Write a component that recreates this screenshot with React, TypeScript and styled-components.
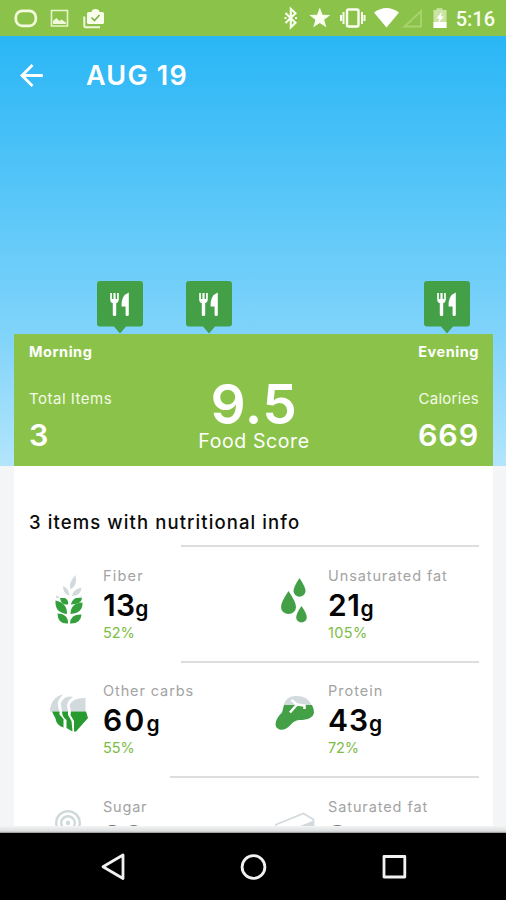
import React from 'react';
import styled, { createGlobalStyle } from 'styled-components';

const GlobalStyle = createGlobalStyle`
  *, *::before, *::after { box-sizing: border-box; }
  html, body { margin: 0; padding: 0; background: #f4f6f8; overflow: hidden; }
  svg { display: block; flex: none; overflow: visible; }
`;

const Screen = styled.div`
  width: 506px;
  height: 900px;
  overflow: hidden;
  display: flex;
  flex-direction: column;
  background: #f3f5f7;
  font-family: Inter, 'Liberation Sans', sans-serif;
  white-space: nowrap;
`;

const StatusBar = styled.div`
  height: 36px;
  flex: none;
  background: #8bc34a;
  display: flex;
  justify-content: space-between;
`;

const StatusGroup = styled.div`
  display: flex;
  gap: 4px;
`;

const Clock = styled.span`
  font-family: Roboto, sans-serif;
  font-size: 20px;
  font-weight: 500;
  line-height: 38px;
  color: #fbfff2;
  padding: 0 11px 0 0;
`;

const Sky = styled.div`
  height: 430px;
  flex: none;
  display: flex;
  flex-direction: column;
  background: linear-gradient(#29b6f6, #81d4fa 70%, #b3e5fc);
`;

const Header = styled.header`
  height: 80px;
  display: flex;
  align-items: center;
  padding: 0 0 0 20px;
  gap: 23px;
`;

const HeaderDate = styled.h1`
  margin: 0;
  font-size: 27px;
  line-height: 80px;
  font-weight: 600;
  letter-spacing: 1.2px;
  color: #fff;
`;

const Timeline = styled.div`
  flex: 1;
  display: flex;
  align-items: flex-end;
  padding-left: 97px;
`;

const Pin = styled.div<{ $gap: number }>`
  width: 46px;
  height: 53px;
  margin-right: ${(p) => p.$gap}px;
`;

const Summary = styled.section`
  height: 132px;
  flex: none;
  margin: 0 13px 0 14px;
  padding: 0 14px 0 15px;
  background: #8bc34a;
  color: #fff;
  display: grid;
  grid-template-columns: 1fr auto 1fr;
`;

const SummaryColumn = styled.div<{ $align: 'left' | 'center' | 'right' }>`
  display: flex;
  flex-direction: column;
  text-align: ${(p) => p.$align};
`;

const TimeOfDay = styled.div`
  font-size: 14.5px;
  font-weight: 700;
  line-height: 36px;
  letter-spacing: 0.55px;
  margin-bottom: 18px;
`;

const SummaryLabel = styled.div<{ $spacing: number }>`
  font-size: 15px;
  line-height: 22px;
  letter-spacing: ${(p) => p.$spacing}px;
  color: #f4fae6;
`;

const SummaryValue = styled.div`
  font-size: 30.5px;
  font-weight: 600;
  line-height: 50px;
  letter-spacing: 0.8px;
`;

const Score = styled.div`
  font-size: 55px;
  font-weight: 600;
  line-height: 52px;
  margin-top: 44px;
  letter-spacing: 0.5px;
`;

const ScoreLabel = styled.div`
  font-size: 19.5px;
  line-height: 23px;
  letter-spacing: 0.6px;
`;

const Details = styled.main`
  height: 367px;
  flex: none;
  overflow: hidden;
  position: relative;
  padding: 0 13px 0 14px;
`;

const Sheet = styled.div`
  background: #fff;
  height: 100%;
  padding: 0 14px 0 15px;
`;

const SheetTitle = styled.h2`
  margin: 0;
  padding-top: 45px;
  height: 79px;
  font-size: 18.5px;
  font-weight: 500;
  line-height: 22px;
  letter-spacing: 1.1px;
  color: #0b0b0b;
`;

const NutrientRow = styled.div<{ $inset: number; $height: number; $pad: number }>`
  height: ${(p) => p.$height}px;
  padding-top: ${(p) => p.$pad}px;
  display: grid;
  grid-template-columns: 225px 225px;
  background: linear-gradient(#dcdddd, #dcdddd) ${(p) => p.$inset}px 0 / 100% 2px no-repeat;
`;

const Nutrient = styled.div`
  display: grid;
  grid-template-columns: 74px auto;
`;

const IconSlot = styled.div`
  padding: 8px 0 0 20px;
`;

const NutrientLabel = styled.div<{ $spacing: number }>`
  font-size: 14.5px;
  line-height: 20px;
  letter-spacing: ${(p) => p.$spacing}px;
  color: #a3a3a3;
`;

const Amount = styled.div<{ $spacing: number; $faded: boolean }>`
  height: 38px;
  font-size: 30px;
  font-weight: 600;
  line-height: 38px;
  letter-spacing: ${(p) => p.$spacing}px;
  color: ${(p) => (p.$faded ? '#7c7c7c' : '#050505')};
`;

const Unit = styled.span`
  font-size: 21px;
  line-height: 1;
  letter-spacing: 0;
`;

const Percent = styled.div<{ $spacing: number }>`
  font-size: 14.5px;
  line-height: 18px;
  letter-spacing: ${(p) => p.$spacing}px;
  color: #7cbd45;
`;

const BottomFade = styled.div`
  position: absolute;
  left: 0;
  right: 0;
  bottom: 0;
  height: 7px;
  background: linear-gradient(#f3f4f4, #dcdedf 75%, #8a8c8d);
`;

const NavBar = styled.nav`
  flex: 1;
  background: #000;
`;

const NotificationIcons = () => (
  <svg width="120" height="36" viewBox="0 0 120 36" fill="none">
    <rect x="15.800" y="10.800" width="20" height="15" rx="6.500" stroke="#f4fadd" strokeWidth="2.700" />
    <path d="M51.500 10.500h16v15.500h-16z" stroke="#e9f5cc" strokeWidth="1.600" />
    <path d="M53 24v-3l3.500-3 3 3 2-1.500 4.500 3V24z" fill="#eff8d8" />
    <path d="M84.300 16.500V26q0 1.300 1.300 1.300H100" stroke="#eef8d9" strokeWidth="2" />
    <path d="M88.500 12h3q.3-3 4-3t4 3h3q1.500 0 1.500 1.500v9q0 1.500-1.500 1.500h-14q-1.500 0-1.500-1.500v-9q0-1.500 1.500-1.500z" fill="#f8fdec" />
    <path d="M91.500 17.500l3 3 5-5.500" stroke="#7eaf45" strokeWidth="1.600" />
  </svg>
);

const SystemIcons = () => (
  <svg width="172" height="36" viewBox="280 0 172 36" fill="none">
    <path d="M285.500 13l10 9.800-4.700 4.500V8.800l4.700 4.400-10 9.800" stroke="#fafff0" strokeWidth="2.100" />
    <path d="M284.500 18h2M295 18h2" stroke="#fafff0" strokeWidth="2" />
    <path d="M319.800 7.500l2.700 7.200 7.800.3-6.100 4.800 2.100 7.500-6.500-4.300-6.500 4.300 2.100-7.500-6.100-4.800 7.800-.3z" fill="#fbfff2" />
    <rect x="347" y="9.500" width="11.500" height="17" rx="1.500" stroke="#fbfff2" strokeWidth="2.400" />
    <path d="M343.500 12v12M341 15v6M362 12v12M364.500 15v6" stroke="#fbfff2" strokeWidth="2" />
    <path d="M374 12.500Q386.500 3.500 399 12.500L386.500 27.500z" fill="#fff" />
    <path d="M404.500 26.500h16.500V11z" stroke="#a9d46f" strokeWidth="1.800" />
    <path d="M433.500 10h3V8.200h6V10h4v18h-13z" fill="#cbe4a2" />
    <path d="M433.500 22h13v6h-13z" fill="#fff" />
    <path d="M442 11.500l-5.500 7h3l-1.500 5 5.800-7h-3z" fill="#fff" />
  </svg>
);

const BackIcon = () => (
  <svg width="43" height="24" viewBox="0 0 43 24" fill="none" stroke="#fff" strokeWidth="2.800">
    <path d="M12.500 1L2 11.500l10.500 10.500M2 11.500h20.800" />
  </svg>
);

const MealPin = () => (
  <svg width="46" height="53" viewBox="0 0 46 53">
    <path d="M3 0h40q3 0 3 3v39.500q0 3-3 3H29L23 52.500 17 45.500H3q-3 0-3-3V3q0-3 3-3z" fill="#43a047" />
    <path d="M13.200 12h1.700v6h1.500v-6h2.200v6h1.500v-6h1.700v6.500q0 3-2.600 3.700V34q0 1-1.700 1t-1.700-1V22.200q-2.600-.7-2.600-3.700z" fill="#fff" />
    <path d="M31.800 11.500V34q0 1-1.600 1t-1.600-1v-8.500h-4q-.6-11 7.200-14z" fill="#fff" />
  </svg>
);

const WheatIcon = () => (
  <svg width="42" height="52" viewBox="0 0 42 52">
    <g fill="#d3dadd">
      <path d="M26.500 1Q19 9 21.500 15.500 29 11 26.500 1z" />
      <path d="M14 12q-.5 7.500 6.500 10Q20 14 14 12z" />
      <path d="M32.500 13.500q-9 2-9.500 8.500 9 0 9.500-8.500z" />
      <path d="M7 21.500q2 0 4 2.500H7z" />
      <path d="M32.500 22l.5 2h-5z" />
    </g>
    <g fill="#34a03c">
      <path d="M11 24h5q4 2 3 6.500Q12 31.500 11 24z" />
      <path d="M33 24q-.5 6.500-11 6.500 1-5 5-6.500z" />
      <path d="M6.500 26.500q-1 12 11.500 13.500.5-11-11.500-13.500z" />
      <path d="M33.500 28.500Q21.500 29 21.500 40q12.500-1 12-11.500z" />
      <path d="M8.500 39.500q0 10.500 10.500 10 .5-9.500-10.500-10z" />
      <path d="M32.500 40.500q-11-.5-11.500 9 11 .5 11.500-9z" />
    </g>
  </svg>
);

const DropsIcon = () => (
  <svg width="42" height="52" viewBox="0 0 42 52" fill="#43a047">
    <path d="M25.500 4q6 9 6 13a6 5.800 0 0 1-12 0q0-4 6-13z" />
    <path d="M14.500 17q7.500 11 7.500 16a7.500 7 0 0 1-15 0q0-5 7.500-16z" />
    <path d="M27.500 32q5.300 7.500 5.300 11.500a5.300 5 0 0 1-10.600 0q0-4 5.300-11.500z" />
  </svg>
);

const BreadIcon = () => (
  <svg width="42" height="52" viewBox="0 0 42 52">
    <g fill="#d3dadd">
      <path d="M.8 22.500Q2 8 14 5.500q-5 5-5.300 9 .3 4 1.800 8z" />
      <path d="M11.700 14.500Q15 6 24 8q-5 3-6 8l1 6.500h-6z" />
      <path d="M20.500 16Q24 8.500 36.500 9v13.500H22z" />
    </g>
    <g fill="#279b30">
      <path d="M3 22.500h7.500v3l4 4.500v8.500q-7-2-8-9z" />
      <path d="M13 22.500h6v3.500l3.500 6 1 10.500-6-3.500v-8q-4.500-3-4.500-8.500z" />
      <path d="M22 22.500h15l2 6.500-12 13.500h-2V32l-3.500-6z" />
    </g>
  </svg>
);

const SteakIcon = () => (
  <svg width="42" height="52" viewBox="0 0 42 52">
    <path d="M1.500 35Q2 29 8 23.500L10 16h28q5 9.500-2 13-4 2-11 2-5 .5-8 4.500Q11 42 5.500 40.500 1.500 39 1.500 35z" fill="#43a047" />
    <path d="M9.500 16Q12 7.500 21 7q13-.5 16.500 9z" fill="#d3dadd" />
    <path d="M16 23.500l7-8M17.500 11l5.500 4.500 7.500 1v3.500" fill="none" stroke="#fff" strokeWidth="2.500" />
  </svg>
);

const SugarIcon = () => (
  <svg width="42" height="52" viewBox="0 0 42 52" fill="none" stroke="#d0d9da" strokeWidth="2.400">
    <circle cx="19" cy="18" r="11.800" />
    <circle cx="19" cy="18" r="6.800" />
    <circle cx="19" cy="18" r="1" />
  </svg>
);

const ButterIcon = () => (
  <svg width="42" height="52" viewBox="0 0 42 52" fill="none">
    <path d="M2 36V19.500L29.500 8.500l10 6V32" stroke="#d3dadd" strokeWidth="1.800" />
    <path d="M25 21.500L39.500 15.500V28L25 34z" fill="#d3dadd" />
  </svg>
);

const NavIcons = () => (
  <svg width="506" height="67" viewBox="0 833 506 67" fill="none" stroke="#f2f2f2" strokeWidth="2.800" strokeLinejoin="round">
    <path d="M123 855v23.500L103 866.700z" />
    <circle cx="253.500" cy="867" r="11.400" />
    <rect x="384" y="856.500" width="20.800" height="20.500" />
  </svg>
);

type NutrientData = {
  label: string;
  labelSpacing: number;
  amount: string;
  amountSpacing: number;
  percent?: string;
  percentSpacing?: number;
  Icon: React.FC;
};

type RowData = { inset: number; height: number; pad: number; faded?: boolean; items: NutrientData[] };

const rows: RowData[] = [
  {
    inset: 152, height: 116, pad: 21,
    items: [
      { label: 'Fiber', labelSpacing: 1.2, amount: '13', amountSpacing: 0.2, percent: '52%', Icon: WheatIcon },
      { label: 'Unsaturated fat', labelSpacing: 0.9, amount: '21', amountSpacing: 0.6, percent: '105%', percentSpacing: 0.4, Icon: DropsIcon },
    ],
  },
  {
    inset: 152, height: 115, pad: 20,
    items: [
      { label: 'Other carbs', labelSpacing: 0.9, amount: '60', amountSpacing: 2.2, percent: '55%', Icon: BreadIcon },
      { label: 'Protein', labelSpacing: 1, amount: '43', amountSpacing: 0.9, percent: '72%', Icon: SteakIcon },
    ],
  },
  {
    inset: 141, height: 115, pad: 21, faded: true,
    items: [
      { label: 'Sugar', labelSpacing: 0.8, amount: '20', amountSpacing: 2, Icon: SugarIcon },
      { label: 'Saturated fat', labelSpacing: 0.9, amount: '9', amountSpacing: 0, Icon: ButterIcon },
    ],
  },
];

const NutrientCell = ({ data, faded }: { data: NutrientData; faded: boolean }) => (
  <Nutrient>
    <IconSlot><data.Icon /></IconSlot>
    <div>
      <NutrientLabel $spacing={data.labelSpacing}>{data.label}</NutrientLabel>
      <Amount $spacing={data.amountSpacing} $faded={faded}>
        {data.amount}<Unit>g</Unit>
      </Amount>
      {data.percent && <Percent $spacing={data.percentSpacing ?? -0.1}>{data.percent}</Percent>}
    </div>
  </Nutrient>
);

export default function App() {
  return (
    <>
      <GlobalStyle />
      <Screen>
        <StatusBar>
          <NotificationIcons />
          <StatusGroup>
            <SystemIcons />
            <Clock>5:16</Clock>
          </StatusGroup>
        </StatusBar>
        <Sky>
          <Header>
            <BackIcon />
            <HeaderDate>AUG 19</HeaderDate>
          </Header>
          <Timeline>
            {[43, 192, 0].map((gap, i) => (
              <Pin key={i} $gap={gap}><MealPin /></Pin>
            ))}
          </Timeline>
          <Summary>
            <SummaryColumn $align="left">
              <TimeOfDay>Morning</TimeOfDay>
              <SummaryLabel $spacing={0.5}>Total Items</SummaryLabel>
              <SummaryValue>3</SummaryValue>
            </SummaryColumn>
            <SummaryColumn $align="center">
              <Score>9.5</Score>
              <ScoreLabel>Food Score</ScoreLabel>
            </SummaryColumn>
            <SummaryColumn $align="right">
              <TimeOfDay>Evening</TimeOfDay>
              <SummaryLabel $spacing={0.3}>Calories</SummaryLabel>
              <SummaryValue>669</SummaryValue>
            </SummaryColumn>
          </Summary>
        </Sky>
        <Details>
          <Sheet>
            <SheetTitle>3 items with nutritional info</SheetTitle>
            {rows.map((row, i) => (
              <NutrientRow key={i} $inset={row.inset} $height={row.height} $pad={row.pad}>
                {row.items.map((item) => (
                  <NutrientCell key={item.label} data={item} faded={!!row.faded} />
                ))}
              </NutrientRow>
            ))}
          </Sheet>
          <BottomFade />
        </Details>
        <NavBar><NavIcons /></NavBar>
      </Screen>
    </>
  );
}
